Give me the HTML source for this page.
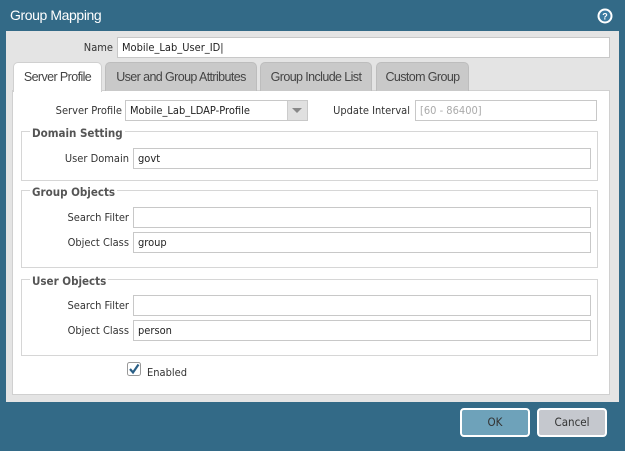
<!DOCTYPE html>
<html><head><style>
*{box-sizing:border-box;margin:0;padding:0}
body{width:625px;height:451px;background:#336a87;font-family:"DejaVu Sans Condensed","Liberation Sans",sans-serif;font-size:11px;color:#333;position:relative;overflow:hidden}
.a{position:absolute}
.title{left:10px;top:7px;color:#fff;font-family:"Liberation Sans",sans-serif;font-size:14px;letter-spacing:-0.4px}
.body{left:6px;top:31px;width:613px;height:371px;background:#e4e4e4}
.inp{position:absolute;background:#fff;border:1px solid #c8c8c8;height:21px;padding:3px 4px;font-size:11px;color:#222;white-space:nowrap}
.lbl{position:absolute;text-align:right;font-size:11px;color:#333;white-space:nowrap}
.tab{position:absolute;top:62px;height:29px;background:#c9c9c9;border:1px solid #bdbdbd;border-bottom:none;border-radius:5px 5px 0 0;font-family:"Liberation Sans",sans-serif;font-size:12.5px;color:#444;text-align:center;line-height:28px;letter-spacing:-0.6px}
.panel{left:12px;top:90px;width:598px;height:305px;background:#fff;border:1px solid #d0d0d0}
.fs{position:absolute;left:21px;width:577px;border:1px solid #d6d6d6}
.lg{position:absolute;left:30px;background:#fff;padding:0 2px;font-weight:bold;color:#555;font-size:11.5px}
.btn{position:absolute;top:408px;height:29px;width:70px;border:2px solid #fff;border-radius:4px;text-align:center;line-height:25px;font-size:11.5px;color:#333}
</style></head><body>
<div class="a title">Group Mapping</div>
<svg class="a" style="left:597px;top:8px" width="16" height="16"><circle cx="8" cy="8" r="7.5" fill="#fff"/><circle cx="8" cy="8" r="5.5" fill="#3b7aa0"/><text x="8" y="11.5" text-anchor="middle" font-size="9" font-weight="bold" fill="#fff" font-family="Liberation Sans">?</text></svg>
<div class="a body"></div>
<div class="lbl" style="right:512px;top:41px">Name</div>
<div class="inp" style="left:117px;top:37px;width:493px">Mobile_Lab_User_ID|</div>
<div class="a panel"></div>
<div class="tab" style="left:13px;width:89px;background:#fff;border-color:#d0d0d0;height:30px">Server Profile</div>
<div class="tab" style="left:105px;width:152px">User and Group Attributes</div>
<div class="tab" style="left:260px;width:112px">Group Include List</div>
<div class="tab" style="left:376px;width:93px">Custom Group</div>
<div class="lbl" style="right:503px;top:104px">Server Profile</div>
<div class="inp" style="left:125px;top:100px;width:183px">Mobile_Lab_LDAP-Profile</div>
<div class="a" style="left:287px;top:101px;width:20px;height:19px;background:#e0e0e0;border-left:1px solid #ccc"></div>
<div class="a" style="left:292px;top:108px;width:0;height:0;border-left:5px solid transparent;border-right:5px solid transparent;border-top:5px solid #888"></div>
<div class="lbl" style="right:215px;top:104px">Update Interval</div>
<div class="inp" style="left:415px;top:100px;width:182px;color:#aaa">[60 - 86400]</div>

<div class="fs" style="top:131px;height:50px"></div>
<div class="lg" style="top:126px">Domain Setting</div>
<div class="lbl" style="right:496px;top:152px">User Domain</div>
<div class="inp" style="left:133px;top:148px;width:458px">govt</div>

<div class="fs" style="top:190px;height:78px"></div>
<div class="lg" style="top:185px">Group Objects</div>
<div class="lbl" style="right:496px;top:211px">Search Filter</div>
<div class="inp" style="left:133px;top:207px;width:458px"></div>
<div class="lbl" style="right:496px;top:236px">Object Class</div>
<div class="inp" style="left:133px;top:232px;width:458px">group</div>

<div class="fs" style="top:279px;height:77px"></div>
<div class="lg" style="top:274px">User Objects</div>
<div class="lbl" style="right:496px;top:299px">Search Filter</div>
<div class="inp" style="left:133px;top:295px;width:458px"></div>
<div class="lbl" style="right:496px;top:324px">Object Class</div>
<div class="inp" style="left:133px;top:320px;width:458px">person</div>

<svg class="a" style="left:127px;top:362px" width="14" height="14"><rect x="0.5" y="0.5" width="13" height="13" rx="2" fill="#fff" stroke="#999"/><path d="M3 7 L6 10.5 L11.5 2.5" fill="none" stroke="#2a5f86" stroke-width="2.2"/></svg>
<div class="lbl" style="left:147px;top:366px;text-align:left">Enabled</div>

<div class="btn" style="left:460px;background:#6ea2ba">OK</div>
<div class="btn" style="left:537px;background:#c5c8ce">Cancel</div>
</body></html>
